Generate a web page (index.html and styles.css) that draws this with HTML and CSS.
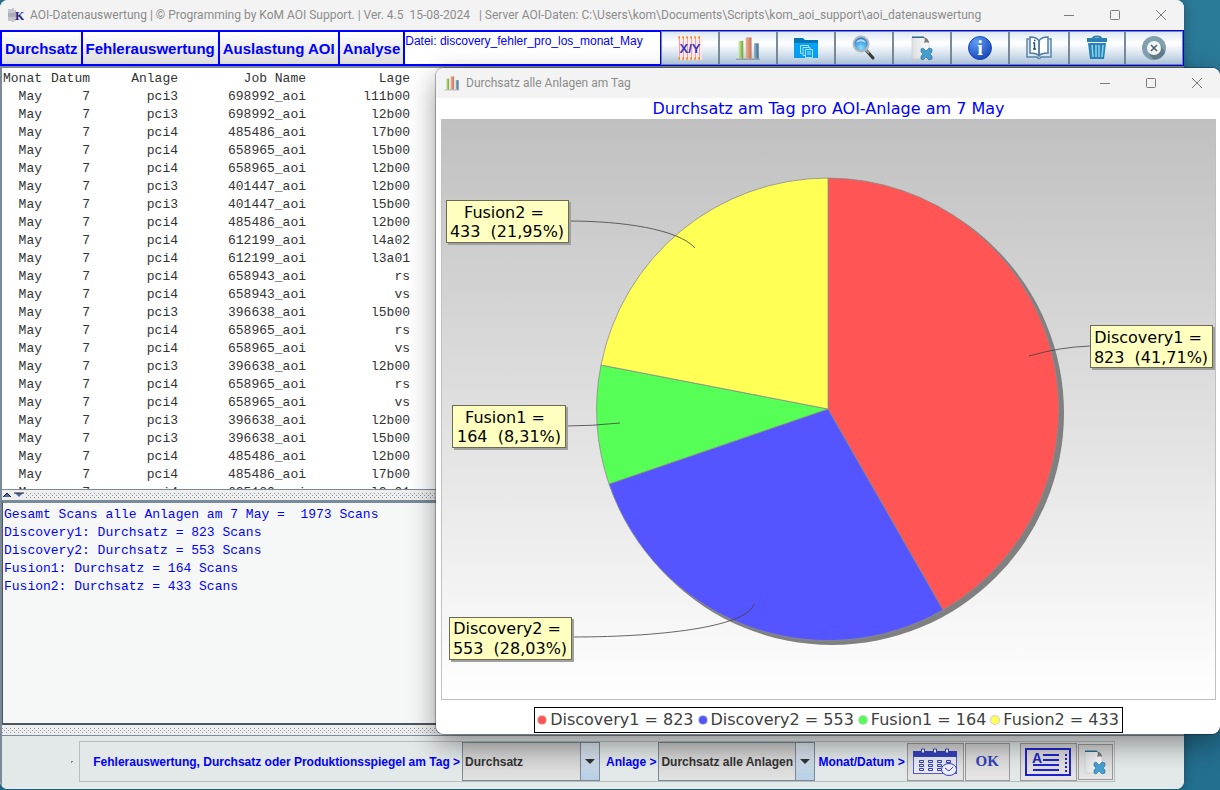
FILE: index.html
```
<!DOCTYPE html>
<html lang="de">
<head>
    <meta charset="UTF-8">
    <meta name="viewport" content="width=device-width, initial-scale=1.0">
    <title>AOI-Datenauswertung</title>
    <link rel="stylesheet" href="styles.css">
</head>
<body>

    <!-- shared icons -->
    <svg class="defs" width="0" height="0">
        <defs>
            <linearGradient id="gGreen"><stop offset="0" stop-color="#d4ebb0"/><stop offset="1" stop-color="#6ba52c"/></linearGradient>
            <linearGradient id="gRed"><stop offset="0" stop-color="#ecb39b"/><stop offset="1" stop-color="#c87456"/></linearGradient>
            <linearGradient id="gBlue"><stop offset="0" stop-color="#9dbdd4"/><stop offset="1" stop-color="#3c6888"/></linearGradient>
            <linearGradient id="gPage"><stop offset="0" stop-color="#dfe2e4"/><stop offset="1" stop-color="#fafafa"/></linearGradient>
            <radialGradient id="gLens" cx="0.5" cy="0.75" r="0.7"><stop offset="0" stop-color="#8fe0ff"/><stop offset="1" stop-color="#1673c8"/></radialGradient>
            <radialGradient id="gInfo" cx="0.35" cy="0.25" r="0.8"><stop offset="0" stop-color="#5f9df5"/><stop offset="1" stop-color="#1846bb"/></radialGradient>
            <pattern id="dots" width="4" height="4" patternUnits="userSpaceOnUse">
                <path d="M0 0h1v1H0zM2 2h1v1H2z" fill="#8a97a3"/>
            </pattern>
            <symbol id="bars" viewBox="0 0 22 22">
                <path d="M1 20.500h20" stroke="#8d999f"/>
                <rect x="3" y="5" width="4" height="15" fill="url(#gGreen)"/>
                <rect x="9" y="2" width="5" height="18" fill="url(#gRed)"/>
                <rect x="16" y="7" width="4" height="13" fill="url(#gBlue)"/>
            </symbol>
            <symbol id="page" viewBox="0 0 24 26">
                <path d="M2 2h12l5 5v17H2z" fill="url(#gPage)" stroke="#c6c9cb" stroke-width="0.600"/>
                <path d="M2 1.500h12v1.500H2z" fill="#2c6b92"/>
                <path d="M14 2c1 2 1 4 0 6 2-1 3-1 5 0 0-3-2-5-5-6z" fill="#777"/>
                <path d="M11 14l2-1 3 3 3-3 3 1v3l-2 2 2 2v3l-3 1-3-3-3 3-2-1v-3l2-2-2-2z" fill="#46a0d2" stroke="#2b6f9b" stroke-width="0.600"/>
            </symbol>
            <symbol id="minimize" viewBox="0 0 12 12"><path d="M1 6.500h10" stroke="#7c7c7c"/></symbol>
            <symbol id="maximize" viewBox="0 0 12 12"><rect x="1.500" y="1.500" width="9" height="9" rx="1" fill="none" stroke="#7c7c7c"/></symbol>
            <symbol id="close" viewBox="0 0 12 12"><path d="M1 1l10 10M11 1L1 11" stroke="#7c7c7c"/></symbol>
        </defs>
    </svg>

    <div class="window">
        <header class="titlebar">
            <svg class="app-icon" viewBox="0 0 16 14">
                <path d="M1 1v12M3 1v12M5 0v14M7 2v11M0 6h8M0 8h8" stroke="#9495ab"/>
                <text x="7" y="12" class="logo-text">K</text>
            </svg>
            <h1>AOI-Datenauswertung | © Programming by KoM AOI Support. | Ver. 4.5&nbsp; 15-08-2024 &nbsp; | Server AOI-Daten: C:\Users\kom\Documents\Scripts\kom_aoi_support\aoi_datenauswertung</h1>
            <div class="window-buttons">
                <button aria-label="Minimieren"><svg><use href="#minimize"/></svg></button>
                <button aria-label="Maximieren"><svg><use href="#maximize"/></svg></button>
                <button aria-label="Schließen"><svg><use href="#close"/></svg></button>
            </div>
        </header>

        <nav class="toolbar">
            <button class="menu-btn">Durchsatz</button>
            <button class="menu-btn">Fehlerauswertung</button>
            <button class="menu-btn">Auslastung AOI</button>
            <button class="menu-btn">Analyse</button>
            <div class="file-name">Datei: discovery_fehler_pro_los_monat_May</div>
            <div class="icon-bar">
                <button aria-label="X/Y">
                    <svg viewBox="0 0 26 26">
                        <rect x="1" y="1" width="24" height="24" fill="#fdeaea"/>
                        <path d="M2.500 1v24M6.500 1v24M10.500 1v24M14.500 1v24M18.500 1v24M22.500 1v24" stroke="#f3a3a3"/>
                        <path d="M1 2.500h24M1 23.500h24" stroke="#f2982e" stroke-width="2" stroke-dasharray="2 2"/>
                        <text x="13" y="18" class="xy-text">X/Y</text>
                    </svg>
                </button>
                <button aria-label="Diagramm"><svg viewBox="0 0 22 22"><use href="#bars"/></svg></button>
                <button aria-label="Ordner">
                    <svg viewBox="0 0 26 26">
                        <path d="M1 3h9l2 2h13v4H1z" fill="#0277b5"/>
                        <path d="M1 8h24v15H1z" fill="#06a2f6"/>
                        <path d="M9.500 18.500h-2v-8h8v2M10 12.500h7v2M10 12.500v8h2M12.500 14.500h7v8h-7zM14 17h4M14 19h4" fill="none" stroke="#a9e3ff"/>
                    </svg>
                </button>
                <button aria-label="Suchen">
                    <svg viewBox="0 0 26 26">
                        <path d="M15 15l7 8" stroke="#3b3b3b" stroke-width="3" stroke-linecap="round"/>
                        <path d="M14 14l4 4" stroke="#9a9a9a" stroke-width="2"/>
                        <circle cx="10" cy="9" r="7.500" fill="url(#gLens)" stroke="#b4b9be" stroke-width="2"/>
                        <path d="M5 8c1-5 9-5 10 0-3-2-7-2-10 0z" fill="#d9effc" opacity="0.8"/>
                    </svg>
                </button>
                <button aria-label="Seite löschen"><svg viewBox="0 0 24 26"><use href="#page"/></svg></button>
                <button aria-label="Info">
                    <svg viewBox="0 0 26 26">
                        <circle cx="13" cy="13" r="11.500" fill="url(#gInfo)" stroke="#1d4fb5"/>
                        <text x="13" y="20" class="info-text">i</text>
                    </svg>
                </button>
                <button class="wide" aria-label="Handbuch">
                    <svg viewBox="0 0 26 26">
                        <path d="M3 4H1v18h10c1 2 3 2 4 0h10V4h-2" fill="#dceaf5" stroke="#5b87ad" stroke-width="1.500"/>
                        <path d="M13 6c-2-4-6-4-9-4v16c3 0 7 0 9 3 2-3 6-3 9-3V2c-3 0-7 0-9 4zv15" fill="#fff" stroke="#4f7da6" stroke-width="1.500"/>
                        <path d="M13 6v15" stroke="#4f7da6" stroke-width="1.500"/>
                        <path d="M8.500 8v6M7 8h2M7 14h3M8 5.500h1.500" stroke="#244f7d" stroke-width="1.500"/>
                    </svg>
                </button>
                <button class="narrow" aria-label="Papierkorb">
                    <svg viewBox="0 0 26 26">
                        <path d="M9 3c0-2 8-2 8 0" fill="none" stroke="#2f7fae" stroke-width="2"/>
                        <path d="M3 3h20v4H3z" fill="#2b80b2"/>
                        <path d="M4 8h18l-2 16H6z" fill="#2884b8"/>
                        <path d="M8 10l1 12M12 10v12M15 10v12M19 10l-1 12" stroke="#8fd9f2" stroke-width="1.500"/>
                    </svg>
                </button>
                <button aria-label="Beenden">
                    <svg viewBox="0 0 26 26">
                        <circle cx="13" cy="13" r="12" fill="#829fae"/>
                        <path d="M18 8l6 9c-2 5-7 8-12 7l-4-5z" fill="#647d8b"/>
                        <circle cx="13" cy="13" r="7" fill="#f5f8fa"/>
                        <path d="M10 10l6 6M16 10l-6 6" stroke="#465f6e" stroke-width="1.500"/>
                    </svg>
                </button>
            </div>
        </nav>

        <main>
            <section class="data-pane">
                <table>
                    <colgroup><col class="c-month"><col class="c-day"><col class="c-machine"><col class="c-job"><col class="c-layer"></colgroup>
                    <thead>
                        <tr><th>Monat</th><th>Datum</th><th>Anlage</th><th>Job Name</th><th>Lage</th></tr>
                    </thead>
                    <tbody>
                        <tr><td>May</td><td>7</td><td>pci3</td><td>698992_aoi</td><td>l11b00</td></tr>
                        <tr><td>May</td><td>7</td><td>pci3</td><td>698992_aoi</td><td>l2b00</td></tr>
                        <tr><td>May</td><td>7</td><td>pci4</td><td>485486_aoi</td><td>l7b00</td></tr>
                        <tr><td>May</td><td>7</td><td>pci4</td><td>658965_aoi</td><td>l5b00</td></tr>
                        <tr><td>May</td><td>7</td><td>pci4</td><td>658965_aoi</td><td>l2b00</td></tr>
                        <tr><td>May</td><td>7</td><td>pci3</td><td>401447_aoi</td><td>l2b00</td></tr>
                        <tr><td>May</td><td>7</td><td>pci3</td><td>401447_aoi</td><td>l5b00</td></tr>
                        <tr><td>May</td><td>7</td><td>pci4</td><td>485486_aoi</td><td>l2b00</td></tr>
                        <tr><td>May</td><td>7</td><td>pci4</td><td>612199_aoi</td><td>l4a02</td></tr>
                        <tr><td>May</td><td>7</td><td>pci4</td><td>612199_aoi</td><td>l3a01</td></tr>
                        <tr><td>May</td><td>7</td><td>pci4</td><td>658943_aoi</td><td>rs</td></tr>
                        <tr><td>May</td><td>7</td><td>pci4</td><td>658943_aoi</td><td>vs</td></tr>
                        <tr><td>May</td><td>7</td><td>pci3</td><td>396638_aoi</td><td>l5b00</td></tr>
                        <tr><td>May</td><td>7</td><td>pci4</td><td>658965_aoi</td><td>rs</td></tr>
                        <tr><td>May</td><td>7</td><td>pci4</td><td>658965_aoi</td><td>vs</td></tr>
                        <tr><td>May</td><td>7</td><td>pci3</td><td>396638_aoi</td><td>l2b00</td></tr>
                        <tr><td>May</td><td>7</td><td>pci4</td><td>658965_aoi</td><td>rs</td></tr>
                        <tr><td>May</td><td>7</td><td>pci4</td><td>658965_aoi</td><td>vs</td></tr>
                        <tr><td>May</td><td>7</td><td>pci3</td><td>396638_aoi</td><td>l2b00</td></tr>
                        <tr><td>May</td><td>7</td><td>pci3</td><td>396638_aoi</td><td>l5b00</td></tr>
                        <tr><td>May</td><td>7</td><td>pci4</td><td>485486_aoi</td><td>l2b00</td></tr>
                        <tr><td>May</td><td>7</td><td>pci4</td><td>485486_aoi</td><td>l7b00</td></tr>
                        <tr><td>May</td><td>7</td><td>pci4</td><td>625130_aoi</td><td>l2a01</td></tr>
                    </tbody>
                </table>
            </section>

            <div class="splitter">
                <svg class="split-arrows" viewBox="0 0 24 8"><path d="M1 6l4-4 4 4z" fill="#4a68b0"/><path d="M1 6l4-4 4 4" fill="none" stroke="#222"/><path d="M13 2h8l-4 4z" fill="#4a68b0"/><path d="M12 2h10" stroke="#222"/></svg>
                <svg class="split-dots"><rect width="100%" height="100%" fill="url(#dots)"/></svg>
            </div>

            <pre class="output">Gesamt Scans alle Anlagen am 7 May =  1973 Scans
Discovery1: Durchsatz = 823 Scans
Discovery2: Durchsatz = 553 Scans
Fusion1: Durchsatz = 164 Scans
Fusion2: Durchsatz = 433 Scans</pre>

            <div class="splitter last">
                <svg class="split-dots"><rect width="100%" height="100%" fill="url(#dots)"/></svg>
            </div>
        </main>

        <footer class="footer">
            <span class="grip"></span>
            <form class="controls">
                <label for="report">Fehlerauswertung, Durchsatz oder Produktionsspiegel am Tag &gt;</label>
                <span class="combo combo-report">
                    <select id="report"><option>Durchsatz</option><option>Fehlerauswertung</option><option>Produktionsspiegel</option></select>
                    <svg viewBox="0 0 10 6"><path d="M0 0h10L5 5z" fill="#333"/></svg>
                </span>
                <label for="machine">Anlage &gt;</label>
                <span class="combo combo-machine">
                    <select id="machine"><option>Durchsatz alle Anlagen</option></select>
                    <svg viewBox="0 0 10 6"><path d="M0 0h10L5 5z" fill="#333"/></svg>
                </span>
                <label for="date">Monat/Datum &gt;</label>
                <button type="button" id="date" class="btn-date" aria-label="Monat/Datum">
                    <svg viewBox="0 0 46 28">
                        <rect x="1.500" y="3.500" width="43" height="22" fill="#e8e9f2" stroke="#5660bb"/>
                        <path d="M1 3h44v6H1z" fill="#3541b8"/>
                        <path d="M9.500 1h3v4h-3zM21.500 1h3v4h-3zM33.500 1h3v4h-3z" fill="#fff" stroke="#3541b8"/>
                        <g fill="none" stroke="#3541b8">
                            <path d="M7.500 12.500h4v2h-4zM16.500 12.500h4v2h-4zM25.500 12.500h4v2h-4zM34.500 12.500h4v2h-4z"/>
                            <path d="M7.500 16.500h4v2h-4zM16.500 16.500h4v2h-4zM25.500 16.500h4v2h-4z"/>
                            <path d="M7.500 20.500h4v2h-4zM16.500 20.500h4v2h-4zM25.500 20.500h4v2h-4z"/>
                        </g>
                        <ellipse cx="37" cy="21.500" rx="7.500" ry="6" fill="#eef" stroke="#3541b8"/>
                        <path d="M33 20l4 3 4-4" fill="none" stroke="#3541b8"/>
                    </svg>
                </button>
                <button type="button" class="btn-ok">OK</button>
                <button type="button" class="btn-card" aria-label="Anzeigen">
                    <svg viewBox="0 0 46 28">
                        <rect x="1" y="1" width="44" height="26" fill="none" stroke="#2222cc" stroke-width="2"/>
                        <text x="7" y="15" class="card-text">A</text>
                        <path d="M18 7h16M18 12h16M8 17h26M8 22h26" stroke="#2222cc" stroke-width="2"/>
                        <path d="M41 6v18" stroke="#2222cc" stroke-width="2" stroke-dasharray="2 2"/>
                    </svg>
                </button>
                <button type="button" class="btn-page" aria-label="Leeren"><svg viewBox="0 0 24 26"><use href="#page"/></svg></button>
            </form>
        </footer>
    </div>

    <section class="window dialog">
        <header class="titlebar">
            <svg class="app-icon" viewBox="0 0 22 22"><use href="#bars"/></svg>
            <h2>Durchsatz alle Anlagen am Tag</h2>
            <div class="window-buttons">
                <button aria-label="Minimieren"><svg><use href="#minimize"/></svg></button>
                <button aria-label="Maximieren"><svg><use href="#maximize"/></svg></button>
                <button aria-label="Schließen"><svg><use href="#close"/></svg></button>
            </div>
        </header>
        <div class="chart">
            <h3>Durchsatz am Tag pro AOI-Anlage am 7 May</h3>
            <div class="plot">
                <svg viewBox="0 0 773 579">
                    <circle cx="390" cy="293" r="232" fill="#808080"/>
                    <g stroke="#8c8c8c" stroke-width="0.8" stroke-linejoin="round">
                        <path d="M386 289V58A231.500 231.500 0 0 1 501 490z" fill="#ff5555"/>
                        <path d="M386 289L501 490A231.500 231.500 0 0 1 167 364z" fill="#5555ff"/>
                        <path d="M386 289L167 364A231.500 231.500 0 0 1 159 245z" fill="#55ff55"/>
                        <path d="M386 289L159 245A231.500 231.500 0 0 1 386 58z" fill="#ffff55"/>
                    </g>
                    <g fill="none" stroke="#404040" stroke-width="0.8">
                        <path d="M126 101C180 101 236 109 253 128"/>
                        <path d="M123 306Q150 306 178 303"/>
                        <path d="M129 517C230 517 306 505 312 484"/>
                        <path d="M648 226Q618 227 587 236"/>
                    </g>
                    <g fill="#a0a0a0">
                        <rect x="6" y="82" width="123" height="43"/>
                        <rect x="12" y="287" width="114" height="43"/>
                        <rect x="9" y="499" width="123" height="43"/>
                        <rect x="650" y="207" width="123" height="43"/>
                    </g>
                    <g fill="#ffffc0" stroke="#6b6b55">
                        <rect x="4.500" y="80.500" width="122" height="42"/>
                        <rect x="10.500" y="285.500" width="113" height="42"/>
                        <rect x="7.500" y="497.500" width="122" height="42"/>
                        <rect x="648.500" y="205.500" width="122" height="42"/>
                    </g>
                    <g class="callout">
                        <text x="62" y="98">Fusion2 =</text><text x="65" y="117">433&nbsp; (21,95%)</text>
                        <text x="63" y="303">Fusion1 =</text><text x="67" y="322">164&nbsp; (8,31%)</text>
                        <text x="65" y="514">Discovery2 =</text><text x="68" y="534">553&nbsp; (28,03%)</text>
                        <text x="706" y="223">Discovery1 =</text><text x="709" y="243">823&nbsp; (41,71%)</text>
                    </g>
                </svg>
            </div>
            <ul class="legend">
                <li class="red">Discovery1 = 823</li>
                <li class="blue">Discovery2 = 553</li>
                <li class="green">Fusion1 = 164</li>
                <li class="yellow">Fusion2 = 433</li>
            </ul>
        </div>
    </section>

</body>
</html>
```
FILE: styles.css
```
* {
    margin: 0;
    padding: 0;
    box-sizing: border-box;
}

body {
    height: 100vh;
    overflow: hidden;
    background: linear-gradient(180deg, #2b7a98, #236f8f);
    font-family: "Liberation Sans", Arial, sans-serif;
    position: relative;
}

svg {
    display: block;
    flex: none;
}

.defs {
    position: absolute;
}

button {
    font-family: inherit;
    cursor: pointer;
}

.window {
    width: calc(100% - 36px);
    height: calc(100vh - 1px);
    display: flex;
    flex-direction: column;
    border-radius: 8px;
    overflow: hidden;
    background: #f3f3f3;
    box-shadow: 0 0 12px rgba(0, 0, 0, 0.3);
}

/* title bars */
.titlebar {
    flex: none;
    height: 30px;
    display: flex;
    align-items: center;
    gap: 6px;
    padding-left: 8px;
    background: #f3f3f3;
}

.titlebar h1,
.titlebar h2 {
    flex: 1;
    min-width: 0;
    font-family: Roboto, "Segoe UI", sans-serif;
    font-size: 12px;
    font-weight: normal;
    color: #8c8c8c;
    white-space: nowrap;
}

.app-icon {
    width: 16px;
    height: 16px;
}

.logo-text {
    font: bold 12px "Liberation Serif", serif;
    fill: #22227c;
}

.window-buttons {
    display: flex;
}

.window-buttons button {
    width: 46px;
    height: 28px;
    display: flex;
    align-items: center;
    justify-content: center;
    border: none;
    background: none;
}

.window-buttons svg {
    width: 12px;
    height: 12px;
}

/* toolbar */
.toolbar {
    flex: none;
    height: 36px;
    display: flex;
    border: 1px solid #00f;
    background: #fff;
}

.menu-btn {
    padding: 0 3px;
    border: 1px solid #00f;
    background: linear-gradient(#fff, #ddd);
    color: #00f;
    font-size: 15px;
    font-weight: bold;
    white-space: nowrap;
}

.file-name {
    flex: 1;
    border: 1px solid #00f;
    font-size: 12px;
    line-height: 18px;
    color: #00f;
    white-space: nowrap;
}

.icon-bar {
    display: flex;
}

.icon-bar button {
    width: 58px;
    display: flex;
    align-items: center;
    justify-content: center;
    border: 1px solid #7a8a99;
    background: linear-gradient(#dde8f3, #fff 35%, #b8cfe5);
}

.icon-bar .wide {
    width: 60px;
}

.icon-bar .narrow {
    width: 56px;
}

.icon-bar svg {
    width: 26px;
    height: 26px;
}

.xy-text {
    font: bold 13px "Liberation Sans", sans-serif;
    fill: #3a3ac0;
    text-anchor: middle;
}

.info-text {
    font: bold 20px "Liberation Serif", serif;
    fill: #fff;
    text-anchor: middle;
}

/* split panes */
main {
    flex: 1;
    min-height: 0;
    display: flex;
    flex-direction: column;
    border-top: 2px solid #7a8a99;
    border-left: 2px solid #7a8a99;
}

.data-pane {
    flex: 1;
    min-height: 0;
    padding-top: 2px;
    overflow: hidden;
    background: #fff;
    border-bottom: 1px solid #7a8a99;
}

.data-pane table {
    table-layout: fixed;
    width: 408px;
    border-collapse: collapse;
    font-family: "Liberation Mono", "Courier New", monospace;
    font-size: 13px;
    line-height: 18px;
    color: #333;
}

.data-pane th,
.data-pane td {
    font-weight: normal;
    text-align: right;
    white-space: nowrap;
}

.c-month {
    width: 40px;
}

.c-day {
    width: 48px;
}

.c-machine {
    width: 88px;
}

.c-job {
    width: 128px;
}

.c-layer {
    width: 104px;
}

.splitter {
    flex: none;
    height: 10px;
    display: flex;
    align-items: center;
    background: #eee;
}

.splitter.last {
    height: 11px;
    border-bottom: 1px solid #7a8a99;
}

.split-arrows {
    width: 24px;
    height: 8px;
}

.split-dots {
    flex: 1;
    min-width: 0;
    height: 5px;
}

.output {
    flex: none;
    height: 225px;
    border-top: 3px solid #7a8a99;
    border-left: 1px solid #4a5560;
    border-bottom: 2px solid #4a5560;
    padding: 3px 1px 0;
    background: #f6f8f8;
    font-family: "Liberation Mono", "Courier New", monospace;
    font-size: 13px;
    line-height: 18px;
    color: #00f;
    overflow: hidden;
}

/* footer controls */
.footer {
    flex: none;
    height: 53px;
    display: flex;
    align-items: center;
    justify-content: center;
    gap: 6px;
    padding-bottom: 2px;
    background: #e3e8e8;
    border-left: 2px solid #7a8a99;
}

.grip {
    width: 2px;
    height: 2px;
    border-top: 1px solid #7a8a99;
    border-left: 1px solid #7a8a99;
}

.controls {
    display: flex;
    align-items: center;
    height: 41px;
    border: 1px solid #b8bebe;
    font-size: 12px;
    font-weight: bold;
    color: #00f;
    white-space: nowrap;
}

.controls label {
    padding: 0 2px 0 6px;
}

.controls label:first-child {
    padding-left: 13px;
}

.combo {
    position: relative;
    height: 39px;
}

.combo select {
    appearance: none;
    width: 100%;
    height: 100%;
    padding: 0 20px 0 2px;
    border: 1px solid #7a8a99;
    border-radius: 0;
    background: linear-gradient(90deg, transparent calc(100% - 19px), #7a8a99 calc(100% - 19px), #7a8a99 calc(100% - 18px), transparent calc(100% - 18px)), linear-gradient(#dde4ec, #b8cfe5) right / 18px 100% no-repeat, linear-gradient(#ccc, #e2e2e2);
    font: bold 12px "Liberation Sans", Arial, sans-serif;
    color: #333;
}

.combo svg {
    position: absolute;
    right: 5px;
    top: 17px;
    width: 10px;
    height: 6px;
    pointer-events: none;
}

.combo-report {
    width: 138px;
}

.combo-machine {
    width: 157px;
}

.combo-machine + label {
    padding-left: 3px;
}

.controls button {
    height: 38px;
    display: flex;
    align-items: center;
    justify-content: center;
    border: 1px solid #999;
    background: linear-gradient(#d4d4d4, #e6e6e6);
}

.controls .btn-date,
.controls .btn-card {
    width: 57px;
}

.controls .btn-date svg,
.controls .btn-card svg {
    width: 46px;
    height: 28px;
}

.controls .btn-ok {
    width: 45px;
    margin: 0 10px 0 1px;
    font: bold 15px "Liberation Serif", serif;
    color: #3541b8;
}

.card-text {
    font: bold 14px "Liberation Sans", sans-serif;
    fill: #2222cc;
}

.controls .btn-page {
    width: 35px;
    height: 36px;
    margin: 0 1px;
}

.btn-page svg {
    width: 24px;
    height: 26px;
}

/* chart dialog */
.dialog {
    position: absolute;
    left: 436px;
    right: 0;
    top: 68px;
    bottom: 56px;
    width: auto;
    height: auto;
    background: #fff;
    box-shadow: 0 0 1px 1px rgba(0, 0, 0, 0.3), 0 10px 28px rgba(0, 0, 0, 0.4);
}

.chart {
    flex: 1;
    min-height: 0;
    display: flex;
    flex-direction: column;
    align-items: center;
    padding: 0 4px 1px 5px;
}

.chart h3 {
    padding-top: 1px;
    font: normal 16px/20px "DejaVu Sans", Tahoma, sans-serif;
    color: #00f;
}

.plot {
    flex: 1;
    min-height: 0;
    width: 100%;
    border: 1px solid #c0c0c0;
    background: linear-gradient(#c0c0c0, #fff);
}

.plot svg {
    width: 100%;
    height: 100%;
}

.callout {
    font: 16px "DejaVu Sans", Tahoma, sans-serif;
    text-anchor: middle;
}

.legend {
    display: flex;
    gap: 5px;
    margin-top: 7px;
    padding: 0 3px;
    border: 1px solid #000;
    list-style: none;
    font: 16px/24px "DejaVu Sans", Tahoma, sans-serif;
    color: #404040;
    white-space: nowrap;
}

.legend li {
    display: flex;
    align-items: center;
    gap: 4px;
}

.legend li::before {
    content: "";
    width: 8px;
    height: 8px;
    border-radius: 50%;
    box-shadow: 0 0 0 1px rgba(128, 128, 128, 0.4);
}

.legend .red::before {
    background: #ff5555;
}

.legend .blue::before {
    background: #5555ff;
}

.legend .green::before {
    background: #55ff55;
}

.legend .yellow::before {
    background: #ffff55;
}
```
